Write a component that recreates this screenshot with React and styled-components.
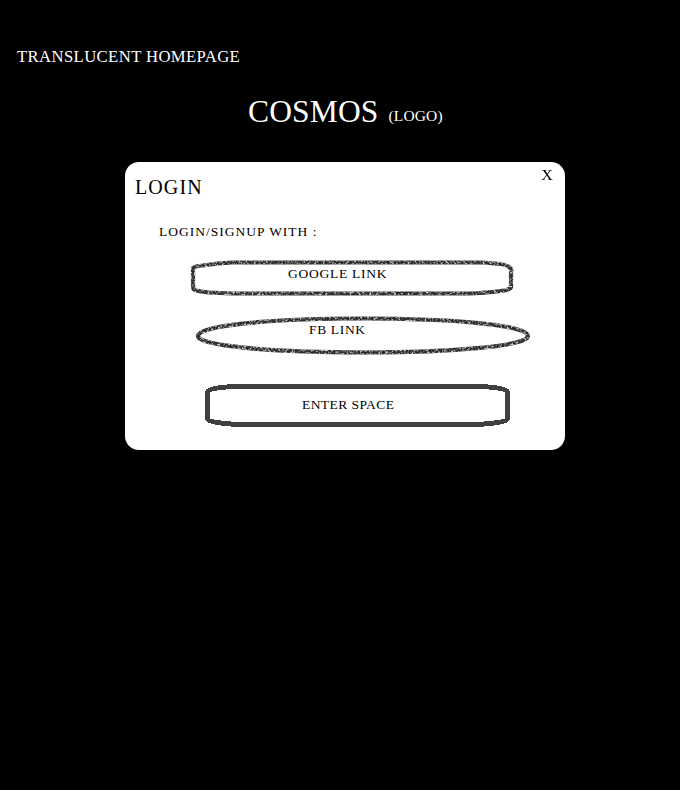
import React, { useId } from "react";
import styled, { createGlobalStyle } from "styled-components";

const GlobalStyle = createGlobalStyle`
  * { box-sizing: border-box; }
  body { margin: 0; background: #000; }
`;

const Page = styled.main`
  width: 680px;
  height: 790px;
  overflow: hidden;
  background: #000;
  color: #fff;
  font-family: "Liberation Serif", "Times New Roman", serif;
  text-transform: uppercase;
  white-space: nowrap;
`;

const Tagline = styled.p`
  margin: 0;
  padding: 47px 0 0 17px;
  font-size: 16.7px;
  line-height: 20px;
  letter-spacing: 0.38px;
`;

const Brand = styled.h1`
  display: flex;
  align-items: baseline;
  gap: 10px;
  margin: 0;
  padding: 27px 0 0 248px;
  height: 95px;
  font-size: 31.5px;
  font-weight: 400;
  line-height: 36px;
  letter-spacing: 0.15px;
`;

const BrandNote = styled.small`
  padding-bottom: 1px;
  font-size: 15.5px;
  transform: translateY(-1px);
`;

const Dialog = styled.section`
  width: 440px;
  height: 288px;
  margin-left: 125px;
  border-radius: 14px;
  background: #fff;
  color: #000;
`;

const DialogHeader = styled.header`
  display: flex;
  justify-content: space-between;
  height: 60px;
  padding: 4px 13px 0 10px;
`;

const Title = styled.h2`
  margin: 9px 0 0;
  font-size: 20px;
  font-weight: 400;
  line-height: 24px;
  letter-spacing: 1.1px;
`;

const Close = styled.button`
  height: 18px;
  margin-top: 1px;
  padding: 0;
  border: 0;
  background: none;
  color: #000;
  font: 14px/18px "Liberation Serif", serif;
  transform: scaleX(1.15);
`;

const Prompt = styled.p`
  margin: 0;
  padding-left: 34px;
  font-size: 13.5px;
  line-height: 20px;
  letter-spacing: 1px;
`;

const Actions = styled.div`
  display: flex;
  flex-direction: column;
  padding-left: 65px;
`;

const Action = styled.button`
  position: relative;
  width: ${(p) => p.$width}px;
  height: ${(p) => p.$height}px;
  margin: ${(p) => p.$margin};
  padding: ${(p) => p.$padding};
  border: 0;
  background: none;
  color: #000;
  font: 13.5px/16px "Liberation Serif", serif;
  letter-spacing: ${(p) => p.$tracking}px;
  text-align: left;
  text-transform: uppercase;
`;

const Outline = styled.svg`
  position: absolute;
  inset: 0;
  width: 100%;
  height: 100%;
  overflow: visible;
  fill: none;
`;

function Charcoal({ d }) {
  const id = useId().replace(/[^a-zA-Z0-9]/g, "");
  return (
    <Outline aria-hidden="true">
      <filter id={id} filterUnits="userSpaceOnUse" x="-4" y="-4" width="345" height="50" colorInterpolationFilters="sRGB">
        <feTurbulence type="fractalNoise" baseFrequency="0.45 0.5" numOctaves="2" seed="7" />
        <feColorMatrix values="0 0 0 0 .8  0 0 0 0 .8  0 0 0 0 .8  5 0 0 0 -2.25" />
        <feComposite in2="SourceGraphic" operator="in" result="grain" />
        <feMerge>
          <feMergeNode in="SourceGraphic" />
          <feMergeNode in="grain" />
        </feMerge>
      </filter>
      <g filter={`url(#${id})`}>
        <path d={d} stroke="#303030" strokeWidth="4.200" />
      </g>
      <path d={d} stroke="#222" strokeOpacity="0.6" strokeWidth="2" strokeDasharray="4 2 6 1 2 2 5 3" />
    </Outline>
  );
}

export default function App() {
  return (
    <>
      <GlobalStyle />
      <Page>
        <Tagline>Translucent Homepage</Tagline>
        <Brand>
          Cosmos <BrandNote>(Logo)</BrandNote>
        </Brand>
        <Dialog>
          <DialogHeader>
            <Title>Login</Title>
            <Close>X</Close>
          </DialogHeader>
          <Prompt>Login/Signup with :</Prompt>
          <Actions>
            <Action $width={324} $height={36} $margin="18px 0 0 0" $padding="6px 0 14px 98px" $tracking={0.75}>
              <Charcoal d="M3 8 Q5 6 13 5.500 Q28 3 42 2.500 H292 Q317 4 319 7 Q322 8 321 13 V27 Q320 30 311 31 Q294 33 280 33.500 H42 L19 32.500 Q5 31 3.500 29 L3 25 Z" />
              Google Link
            </Action>
            <Action $width={334} $height={38} $margin="20px 0 0 6px" $padding="6px 0 16px 113px" $tracking={0.65}>
              <Charcoal d="M2 19.500 C4 9 77 2.500 167 2.500 S330 9 332 19.500 S257 36.500 167 36.500 S0 30 2 19.500 Z" />
              FB Link
            </Action>
            <Action $width={305} $height={44} $margin="29px 0 0 15px" $padding="14px 0 14px 97px" $tracking={0.43}>
              <Outline aria-hidden="true" shapeRendering="crispEdges">
                <path d="M2.500 9 Q4 4 34 3.500 H271 Q301 4 302.500 9 V36 Q301 40 271 41.500 H34 Q4 40 2.500 36 Z" stroke="#404040" strokeWidth="5" />
              </Outline>
              Enter Space
            </Action>
          </Actions>
        </Dialog>
      </Page>
    </>
  );
}
